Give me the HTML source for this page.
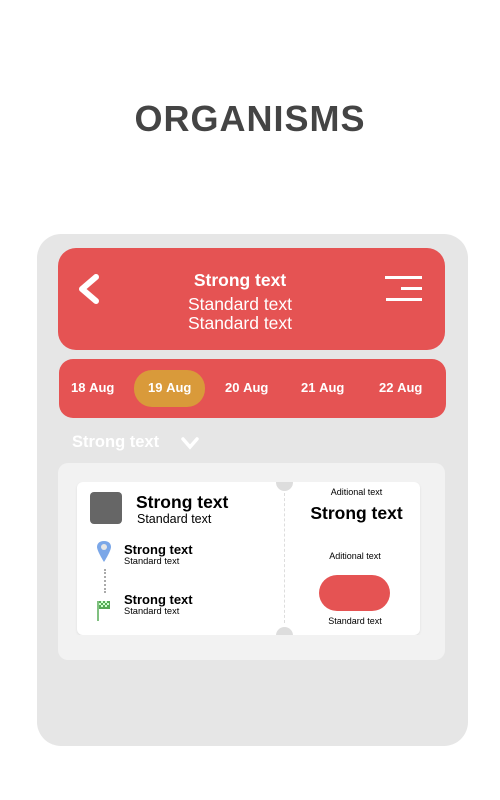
<!DOCTYPE html><html><head><style>
*{margin:0;padding:0;box-sizing:border-box}
body{width:500px;height:800px;background:#fff;font-family:"Liberation Sans",sans-serif;position:relative;overflow:hidden}
.a{position:absolute}
.w{color:#fff}
</style></head><body>
<div class="a" style="left:0;top:98px;width:500px;text-align:center;font-size:36px;font-weight:bold;color:#444;letter-spacing:1px">ORGANISMS</div>
<div class="a" style="left:37px;top:234px;width:431px;height:512px;background:#e6e6e6;border-radius:24px"></div>
<div class="a" style="left:58px;top:248px;width:387px;height:102px;background:#e55353;border-radius:18px"></div>
<svg class="a" style="left:74px;top:272px" width="30" height="34"><path d="M22 5 L8 17 L22 29" stroke="#fff" stroke-width="6" fill="none" stroke-linecap="round" stroke-linejoin="round"/></svg>
<div class="a" style="left:385px;top:276px;width:37px;height:3px;background:#fff"></div>
<div class="a" style="left:401px;top:287px;width:21px;height:3px;background:#fff"></div>
<div class="a" style="left:386px;top:298px;width:36px;height:3px;background:#fff"></div>
<div class="a w" style="left:140px;top:270px;width:200px;text-align:center;font-size:17.5px;font-weight:bold">Strong text</div>
<div class="a w" style="left:140px;top:295px;width:200px;text-align:center;font-size:17.5px;line-height:19px">Standard text<br>Standard text</div>
<div class="a" style="left:59px;top:359px;width:387px;height:59px;background:#e55353;border-radius:14px"></div>
<div class="a" style="left:134px;top:370px;width:71px;height:37px;background:#d99a3a;border-radius:18px"></div>
<div class="a w" style="top:380px;left:0;width:500px;font-size:13px;font-weight:bold">
<span class="a" style="left:71px">18&nbsp;Aug</span><span class="a" style="left:148px">19&nbsp;Aug</span><span class="a" style="left:225px">20&nbsp;Aug</span><span class="a" style="left:301px">21&nbsp;Aug</span><span class="a" style="left:379px">22&nbsp;Aug</span></div>
<div class="a w" style="left:72px;top:433px;font-size:16.5px;font-weight:bold">Strong text</div>
<svg class="a" style="left:180px;top:435px" width="20" height="16"><path d="M3 4 L10 12 L17 4" stroke="#fff" stroke-width="3.5" fill="none" stroke-linecap="round"/></svg>
<div class="a" style="left:58px;top:463px;width:387px;height:197px;background:#f2f2f2;border-radius:10px"></div>
<div class="a" style="left:77px;top:482px;width:343px;height:153px;background:#fff;border-radius:6px;box-shadow:0 1px 2px #ddd"></div>
<div class="a" style="left:276px;top:474px;width:17px;height:17px;border-radius:50%;background:#ddd"></div>
<div class="a" style="left:276px;top:627px;width:17px;height:17px;border-radius:50%;background:#ddd"></div>
<div class="a" style="left:77px;top:466px;width:343px;height:16px;background:#f2f2f2"></div>
<div class="a" style="left:77px;top:635px;width:343px;height:12px;background:#f2f2f2"></div>
<div class="a" style="left:284px;top:493px;height:130px;border-left:1px dashed #ddd"></div>
<div class="a" style="left:90px;top:492px;width:32px;height:32px;background:#666;border-radius:4px"></div>
<div class="a" style="left:136px;top:492px;font-size:17.5px;font-weight:bold">Strong text</div>
<div class="a" style="left:137px;top:512px;font-size:12.5px">Standard text</div>
<svg class="a" style="left:96px;top:540px" width="16" height="24"><path d="M8 1 C3 1 1 4 1 7 C1 11 8 22 8 22 C8 22 15 11 15 7 C15 4 13 1 8 1Z" fill="#7ba7e8"/><circle cx="8" cy="7" r="3" fill="#e6e6e6"/></svg>
<div class="a" style="left:104px;top:569px;height:24px;border-left:2px dotted #aaa"></div>
<svg class="a" style="left:96px;top:599px" width="16" height="24"><path d="M2 2 V22" stroke="#5a5" stroke-width="1.5"/><rect x="3" y="2" width="11" height="8" fill="#5a5"/><path d="M5 2h2v2h-2zM9 2h2v2h-2zM3 4h2v2h-2zM7 4h2v2h-2zM11 4h2v2h-2zM5 6h2v2h-2zM9 6h2v2h-2z" fill="#cfc"/></svg>
<div class="a" style="left:124px;top:542px;font-size:13px;font-weight:bold">Strong text</div>
<div class="a" style="left:124px;top:556px;font-size:9.3px">Standard text</div>
<div class="a" style="left:124px;top:592px;font-size:13px;font-weight:bold">Strong text</div>
<div class="a" style="left:124px;top:606px;font-size:9.3px">Standard text</div>
<div class="a" style="left:285px;top:487px;width:143px;text-align:center;font-size:9px">Aditional text</div>
<div class="a" style="left:285px;top:503px;width:143px;text-align:center;font-size:17.5px;font-weight:bold">Strong text</div>
<div class="a" style="left:285px;top:551px;width:140px;text-align:center;font-size:9px">Aditional text</div>
<div class="a" style="left:319px;top:575px;width:71px;height:36px;background:#e55353;border-radius:18px"></div>
<div class="a" style="left:285px;top:616px;width:140px;text-align:center;font-size:9px">Standard text</div>
</body></html>
